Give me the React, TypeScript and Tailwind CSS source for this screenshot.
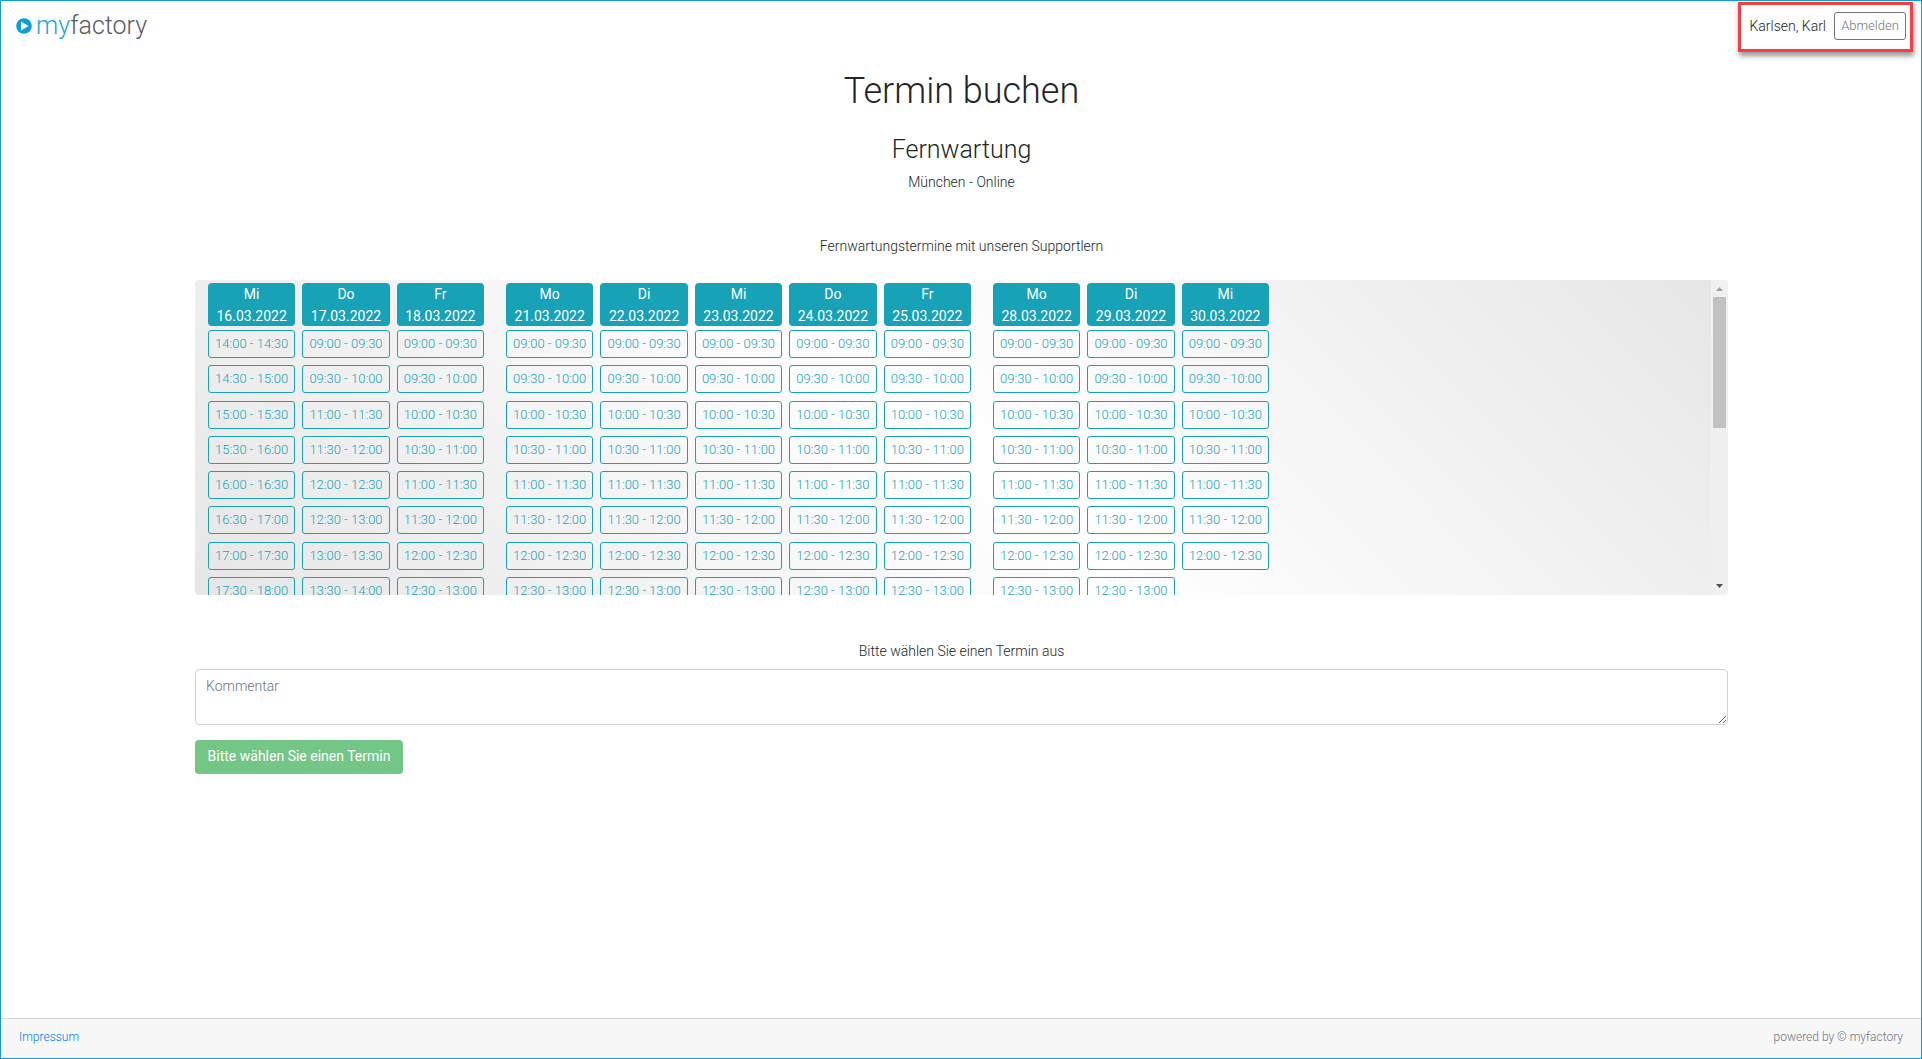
const weeks = [
    {
        id: 11,
        className: "grid w-[276px] grid-cols-3 gap-x-[7px]",
        days: [
            { name: "Mi", date: "16.03.2022", slots: ["14:00 - 14:30", "14:30 - 15:00", "15:00 - 15:30", "15:30 - 16:00", "16:00 - 16:30", "16:30 - 17:00", "17:00 - 17:30", "17:30 - 18:00"] },
            { name: "Do", date: "17.03.2022", slots: ["09:00 - 09:30", "09:30 - 10:00", "11:00 - 11:30", "11:30 - 12:00", "12:00 - 12:30", "12:30 - 13:00", "13:00 - 13:30", "13:30 - 14:00"] },
            { name: "Fr", date: "18.03.2022", slots: morning(8) },
        ],
    },
    {
        id: 12,
        className: "grid w-[465px] grid-cols-5 gap-x-[7px]",
        days: [
            { name: "Mo", date: "21.03.2022", slots: morning(8) },
            { name: "Di", date: "22.03.2022", slots: morning(8) },
            { name: "Mi", date: "23.03.2022", slots: morning(8) },
            { name: "Do", date: "24.03.2022", slots: morning(8) },
            { name: "Fr", date: "25.03.2022", slots: morning(8) },
        ],
    },
    {
        id: 13,
        className: "grid w-[276px] grid-cols-3 gap-x-[7px]",
        days: [
            { name: "Mo", date: "28.03.2022", slots: morning(8) },
            { name: "Di", date: "29.03.2022", slots: morning(8) },
            { name: "Mi", date: "30.03.2022", slots: morning(7) },
        ],
    },
];

// half-hour slots starting at 09:00
function morning(count: number) {
    return [
        "09:00 - 09:30",
        "09:30 - 10:00",
        "10:00 - 10:30",
        "10:30 - 11:00",
        "11:00 - 11:30",
        "11:30 - 12:00",
        "12:00 - 12:30",
        "12:30 - 13:00",
    ].slice(0, count);
}

function Logo() {
    return (
        <a href="#" className="flex items-center gap-1">
            <svg width="16" height="16" viewBox="0 0 16 16" aria-hidden="true">
                <circle cx="8" cy="8" r="7.800" fill="#0d9ddb" />
                <path d="M5 3.600 12.600 8 5 12.400z" fill="#fff" />
            </svg>
            <span className="text-[25px] leading-8 font-light text-[#58595b]">
                <span className="text-[#1ba1e2]">my</span>factory
            </span>
        </a>
    );
}

function ScrollBar() {
    return (
        <div className="flex w-[17px] shrink-0 flex-col items-center bg-[#f0f0f0]">
            <svg width="17" height="17" viewBox="0 0 17 17" aria-hidden="true">
                <path d="M5 11h7L8.500 7z" fill="#a3a3a3" />
            </svg>
            <div className="h-[131px] w-[13px] bg-[#c1c1c1]"></div>
            <svg width="17" height="17" viewBox="0 0 17 17" className="mt-auto" aria-hidden="true">
                <path d="M5 6h7L8.500 10z" fill="#505050" />
            </svg>
        </div>
    );
}

export default function App() {
    return (
        <div className="flex min-h-screen flex-col border border-[#0d9ddb] bg-white font-['Roboto',sans-serif] text-[14px] leading-[22px] font-light text-[#212529]">
            <header className="flex items-start justify-between pr-2 pl-[15px]">
                <div className="pt-[9px]">
                    <Logo />
                </div>
                <div className="mt-px flex h-[50px] items-start gap-2 border-[3px] border-[#f93c40] pt-[7px] pr-1 pl-2 shadow-[1px_4px_5px_rgba(0,0,0,0.4)]">
                    <span className="pt-[3px]">Karlsen, Karl</span>
                    <button type="button" className="h-7 w-[72px] rounded-[3px] border border-[#6c757d] text-[13px] leading-5 text-[#6c757d]">
                        Abmelden
                    </button>
                </div>
            </header>

            <main className="mx-auto w-4/5 flex-1 pt-[18px] pr-px pl-0.5">
                <div className="text-center">
                    <h1 className="text-[36px] leading-[43px] font-light">Termin buchen</h1>
                    <h2 className="mt-[22px] text-[25px] leading-[30px] font-light">Fernwartung</h2>
                    <p className="mt-1.5">München - Online</p>
                    <p className="mt-[42px]">Fernwartungstermine mit unseren Supportlern</p>
                </div>

                <section className="mt-[23px] flex h-[315px] overflow-hidden rounded-[4px] bg-[linear-gradient(45deg,#e6e6e6,#ffffff_50%,#e6e6e6)]">
                    <div className="flex flex-1 gap-[22px] overflow-hidden pt-[3px] pl-[13px]">
                        {weeks.map((week) => (
                            <div key={week.id} className={week.className}>
                                {week.days.map((day) => (
                                    <div key={day.date}>
                                        <div className="mb-1 flex h-[43px] flex-col rounded-[4px] bg-[#17a2b8] text-center font-normal text-white">
                                            <span>{day.name}</span>
                                            <span>{day.date}</span>
                                        </div>
                                        <div className="grid h-[282px] grid-rows-8">
                                            {day.slots.map((slot) => (
                                                <button
                                                    key={slot}
                                                    type="button"
                                                    className="h-7 w-full rounded-[3px] border border-[#17a2b8] text-[13px] leading-5 whitespace-nowrap text-[#17a2b8]"
                                                >
                                                    {slot}
                                                </button>
                                            ))}
                                        </div>
                                    </div>
                                ))}
                            </div>
                        ))}
                    </div>
                    <ScrollBar />
                </section>

                <form className="mt-[45px]">
                    <label htmlFor="comment" className="block text-center">
                        Bitte wählen Sie einen Termin aus
                    </label>
                    <textarea
                        id="comment"
                        placeholder="Kommentar"
                        className="mt-[7px] block h-[56px] w-full rounded-[4px] border border-[#ced4da] bg-white px-2.5 py-[5px] placeholder:text-[#6c757d]"
                    />
                    <button type="button" className="mt-[15px] h-[34px] w-[208px] rounded-[4px] bg-[#74c686] pb-0.5 font-normal text-white">
                        Bitte wählen Sie einen Termin
                    </button>
                </form>
            </main>

            <footer className="flex h-10 items-center justify-between border-t border-[#d5d5d5] bg-[#f7f7f7] px-[18px] pb-1 text-[12px] leading-[18px]">
                <a href="#" className="text-[#007bff]">
                    Impressum
                </a>
                <span className="text-[#6c757d]">powered by © myfactory</span>
            </footer>
        </div>
    );
}
